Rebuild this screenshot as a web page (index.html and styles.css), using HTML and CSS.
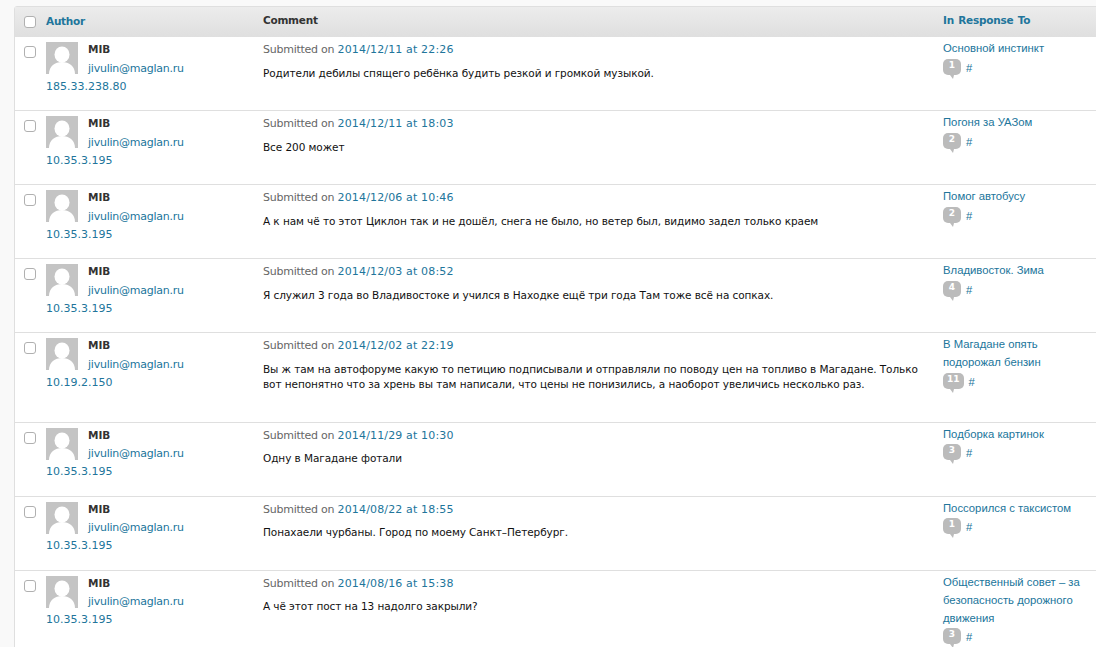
FILE: index.html
```html
<!DOCTYPE html>
<html lang="ru">
<head>
<meta charset="utf-8">
<title>Comments</title>
<link rel="stylesheet" href="styles.css">
</head>
<body>
<svg class="defs" width="0" height="0" aria-hidden="true">
  <symbol id="avatar" viewBox="0 0 32 32">
    <rect width="32" height="32" fill="#c4c4c4"/>
    <ellipse cx="16" cy="12.5" rx="7.5" ry="8" fill="#fff"/>
    <path d="M3 32c0-8 6-12 13-12s13 4 13 12z" fill="#fff"/>
  </symbol>
</svg>
<div class="panel">
<div class="row head">
  <div class="cb"><span class="box"></span></div>
  <div class="author"><a class="th" href="#">Author</a></div>
  <div class="comment"><b class="th">Comment</b></div>
  <div class="resp"><a class="th" href="#">In Response To</a></div>
</div>

<div class="row">
  <div class="cb"><span class="box"></span></div>
  <div class="author"><svg class="ava"><use href="#avatar"/></svg><strong>MIB</strong><a class="mail" href="#">jivulin@maglan.ru</a><a href="#">185.33.238.80</a></div>
  <div class="comment"><div class="sub">Submitted on <a href="#">2014/12/11 at 22:26</a></div><p>Родители дебилы спящего ребёнка будить резкой и громкой музыкой.</p></div>
  <div class="resp"><a class="t" href="#">Основной инстинкт</a><div class="meta"><span class="bub">1</span><a href="#">#</a></div></div>
</div>

<div class="row">
  <div class="cb"><span class="box"></span></div>
  <div class="author"><svg class="ava"><use href="#avatar"/></svg><strong>MIB</strong><a class="mail" href="#">jivulin@maglan.ru</a><a href="#">10.35.3.195</a></div>
  <div class="comment"><div class="sub">Submitted on <a href="#">2014/12/11 at 18:03</a></div><p>Все 200 может</p></div>
  <div class="resp"><a class="t" href="#">Погоня за УАЗом</a><div class="meta"><span class="bub">2</span><a href="#">#</a></div></div>
</div>

<div class="row">
  <div class="cb"><span class="box"></span></div>
  <div class="author"><svg class="ava"><use href="#avatar"/></svg><strong>MIB</strong><a class="mail" href="#">jivulin@maglan.ru</a><a href="#">10.35.3.195</a></div>
  <div class="comment"><div class="sub">Submitted on <a href="#">2014/12/06 at 10:46</a></div><p>А к нам чё то этот Циклон так и не дошёл, снега не было, но ветер был, видимо задел только краем</p></div>
  <div class="resp"><a class="t" href="#">Помог автобусу</a><div class="meta"><span class="bub">2</span><a href="#">#</a></div></div>
</div>

<div class="row">
  <div class="cb"><span class="box"></span></div>
  <div class="author"><svg class="ava"><use href="#avatar"/></svg><strong>MIB</strong><a class="mail" href="#">jivulin@maglan.ru</a><a href="#">10.35.3.195</a></div>
  <div class="comment"><div class="sub">Submitted on <a href="#">2014/12/03 at 08:52</a></div><p>Я служил 3 года во Владивостоке и учился в Находке ещё три года Там тоже всё на сопках.</p></div>
  <div class="resp"><a class="t" href="#">Владивосток. Зима</a><div class="meta"><span class="bub">4</span><a href="#">#</a></div></div>
</div>

<div class="row">
  <div class="cb"><span class="box"></span></div>
  <div class="author"><svg class="ava"><use href="#avatar"/></svg><strong>MIB</strong><a class="mail" href="#">jivulin@maglan.ru</a><a href="#">10.19.2.150</a></div>
  <div class="comment"><div class="sub">Submitted on <a href="#">2014/12/02 at 22:19</a></div><p>Вы ж там на автофоруме какую то петицию подписывали и отправляли по поводу цен на топливо в Магадане. Только вот непонятно что за хрень вы там написали, что цены не понизились, а наоборот увеличись несколько раз.</p></div>
  <div class="resp"><a class="t" href="#">В Магадане опять подорожал бензин</a><div class="meta"><span class="bub">11</span><a href="#">#</a></div></div>
</div>

<div class="row">
  <div class="cb"><span class="box"></span></div>
  <div class="author"><svg class="ava"><use href="#avatar"/></svg><strong>MIB</strong><a class="mail" href="#">jivulin@maglan.ru</a><a href="#">10.35.3.195</a></div>
  <div class="comment"><div class="sub">Submitted on <a href="#">2014/11/29 at 10:30</a></div><p>Одну в Магадане фотали</p></div>
  <div class="resp"><a class="t" href="#">Подборка картинок</a><div class="meta"><span class="bub">3</span><a href="#">#</a></div></div>
</div>

<div class="row">
  <div class="cb"><span class="box"></span></div>
  <div class="author"><svg class="ava"><use href="#avatar"/></svg><strong>MIB</strong><a class="mail" href="#">jivulin@maglan.ru</a><a href="#">10.35.3.195</a></div>
  <div class="comment"><div class="sub">Submitted on <a href="#">2014/08/22 at 18:55</a></div><p>Понахаели чурбаны. Город по моему Санкт–Петербург.</p></div>
  <div class="resp"><a class="t" href="#">Поссорился с таксистом</a><div class="meta"><span class="bub">1</span><a href="#">#</a></div></div>
</div>

<div class="row">
  <div class="cb"><span class="box"></span></div>
  <div class="author"><svg class="ava"><use href="#avatar"/></svg><strong>MIB</strong><a class="mail" href="#">jivulin@maglan.ru</a><a href="#">10.35.3.195</a></div>
  <div class="comment"><div class="sub">Submitted on <a href="#">2014/08/16 at 15:38</a></div><p>А чё этот пост на 13 надолго закрыли?</p></div>
  <div class="resp"><a class="t" href="#">Общественный совет – за безопасность дорожного движения</a><div class="meta"><span class="bub">3</span><a href="#">#</a></div></div>
</div>
</div>
</body>
</html>
```
FILE: styles.css
```css
html, body { margin: 0; height: 647px; overflow: hidden; }
body {
  background: #f9f9f9;
  font-family: "DejaVu Sans", sans-serif;
  font-size: 11px;
  color: #333;
  padding: 6px 0 0 14px;
  box-sizing: border-box;
}
.defs { position: absolute; }
a { color: #21759b; text-decoration: none; }
.panel {
  width: 1100px;
  background: #fff;
  border: 1px solid #dfdfdf;
  border-radius: 3px 3px 0 0;
}
.row {
  display: grid;
  grid-template-columns: 31px 217px 680px 1fr;
  border-bottom: 1px solid #dfdfdf;
  min-height: 73px;
}
.head {
  min-height: 30px;
  height: 30px;
  align-items: center;
  background: linear-gradient(#ececec, #dfdfdf);
  border-bottom: 0;
}
.head > div { padding-top: 0; margin-top: -3px; line-height: 18px; }
.head .cb { margin-top: -1px; }
.th { font-weight: bold; font-size: 10.5px; letter-spacing: -.25px; word-spacing: 1px; color: #21759b; }
.head b.th { color: #333; }
.box {
  display: block;
  width: 10px;
  height: 10px;
  background: #fff;
  border: 1px solid #b0b0b0;
  border-radius: 3px;
  margin-left: 9px;
}
.row:not(.head) .box { margin-top: 9px; }
.author { padding-top: 3px; line-height: 18px; }
.ava { float: left; width: 32px; height: 32px; margin: 2px 10px 0 0; }
.author strong { display: block; font-size: 10.5px; }
.author a { display: block; }
.author .mail { padding-top: 2px; letter-spacing: -.24px; }
.comment { padding: 3px 20px 0 0; }
.sub { line-height: 18px; color: #666; padding-top: 1px; letter-spacing: -.25px; }
.sub a { letter-spacing: .15px; }
.comment p { margin: 7px 0 0; line-height: 15px; color: #111; font-size: 10.5px; letter-spacing: -.08px; }
.resp { padding: 2px 0 0 0; font-family: "Liberation Sans", sans-serif; font-size: 11.3px; line-height: 18px; width: 150px; }
.head .resp { padding: 0; font-family: "DejaVu Sans", sans-serif; }
.t { display: block; }
.meta { display: flex; align-items: flex-start; margin-top: 1px; height: 50px; }
.meta a { padding-top: 1px; margin-left: 5px; }
.bub {
  position: relative;
  display: block;
  min-width: 10px;
  padding: 0 4px;
  margin-top: 1px;
  height: 16px;
  background: #bbb;
  border-radius: 5px;
  color: #fff;
  font: bold 9px/12px "DejaVu Sans", sans-serif;
  text-align: center;
}
.bub::after {
  content: "";
  position: absolute;
  left: 7px;
  top: 16px;
  border-top: 4px solid #bbb;
  border-left: 3px solid transparent;
  border-right: 1px solid transparent;
}
/* the lower rows sit a pixel tighter in the reference */
.row:nth-child(n+7) .mail { padding-top: 1px; }
.row:nth-child(n+7) .comment p { margin-top: 6px; }
.row:nth-child(n+7) .meta { margin-top: 0; }
```
